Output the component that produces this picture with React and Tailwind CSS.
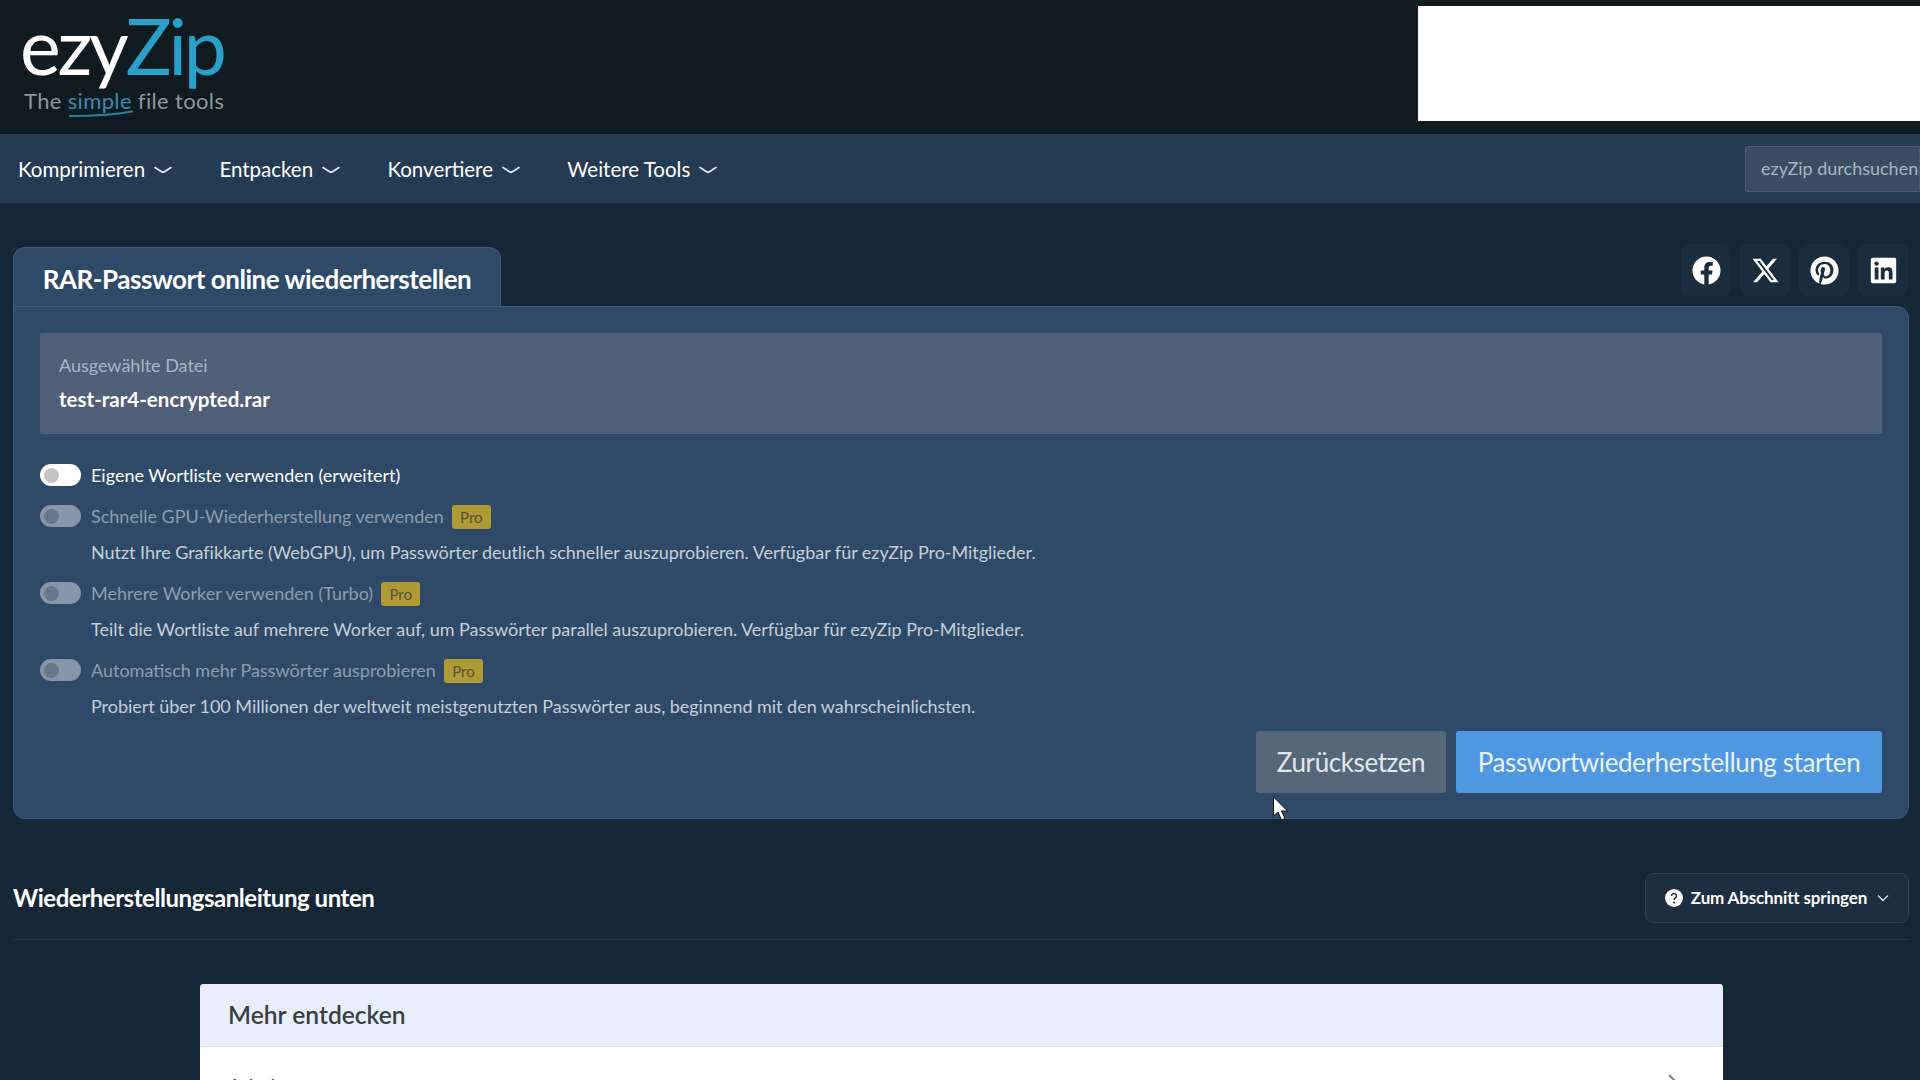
import React from "react";
import { FaFacebook, FaPinterest, FaLinkedin } from "react-icons/fa";
import { FaXTwitter } from "react-icons/fa6";

const Chev = () => (
  <svg width="18" height="8" viewBox="0 0 18 8" fill="none" stroke="#e8eef3" strokeWidth="1.6" strokeLinecap="round" strokeLinejoin="round">
    <path d="M1 1.5 C4 3.5 7 5.5 9 6.5 C11 5.5 14 3.5 17 1.5" />
  </svg>
);

const NavItem = ({ label }) => (
  <div className="flex items-center gap-[9px] text-[20.5px] text-white">
    <span>{label}</span>
    <Chev />
  </div>
);

const Toggle = ({ active }) => (
  <div className={`flex h-[22px] w-[41px] shrink-0 items-center rounded-full pl-[4px] ${active ? "bg-white" : "bg-[#8796a8]"}`}>
    <div className={`h-[15px] w-[15px] rounded-full ${active ? "bg-[#c4c4c4]" : "bg-[#687789]"}`} />
  </div>
);

const Pro = () => (
  <span className="ml-[8px] mt-[2px] flex h-[24px] w-[39px] items-center justify-center rounded-[3px] bg-[#b09a34] text-[15px] text-[#52533f]">Pro</span>
);

const Option = ({ label, desc }) => (
  <div className="flex flex-col">
    <div className="flex h-[24px] items-center gap-[10px]">
      <Toggle />
      <div className="flex items-center">
        <span className="text-[18px] text-[#8e9cad]">{label}</span>
        <Pro />
      </div>
    </div>
    <p className="mt-[12px] h-[24px] pl-[51px] text-[18px] leading-[24px] tracking-[-0.03px] text-[#c6ced7]">{desc}</p>
  </div>
);

const Social = ({ children }) => (
  <div className="flex h-[52px] w-[50px] items-center justify-center rounded-[8px] bg-[#1a2d3e] text-[29px] text-white">{children}</div>
);

export default function App() {
  return (
    <div className="relative h-screen w-full overflow-hidden bg-[#152737] font-['Lato',sans-serif]">
      <header className="flex h-[134px] items-start justify-between bg-[#0f1a21]">
        <div className="ml-[20px] mt-[3px] flex flex-col">
          <div className="flex h-[85px] items-center text-[77px] font-normal leading-none tracking-[-3.2px]">
            <span className="text-white">ezy</span>
            <span className="text-[#2a9fc9]">Zip</span>
          </div>
          <div className="relative ml-[4px] text-[22px] leading-[26px] tracking-[0.35px] text-[#8b999d]">
            The <span className="text-[#3b8cab]">simple</span> file tools
            <svg className="absolute left-[45px] top-[22px]" width="64" height="8" viewBox="0 0 64 8" fill="none">
              <path d="M1 6 C20 6 44 5 63 1.5" stroke="#2f7f9e" strokeWidth="2.2" strokeLinecap="round" />
            </svg>
          </div>
        </div>
        <div className="mt-[6px] h-[115px] w-[502px] bg-white" />
      </header>

      <nav className="flex h-[71px] items-center justify-between border-b-2 border-[#16293a] bg-[#243b52] pl-[18px] pt-[2px]">
        <div className="flex items-center gap-[47.3px]">
          <NavItem label="Komprimieren" />
          <NavItem label="Entpacken" />
          <NavItem label="Konvertiere" />
          <NavItem label="Weitere Tools" />
        </div>
        <div className="mb-[2px] flex h-[46px] w-[175px] shrink-0 items-center overflow-hidden whitespace-nowrap rounded-l-[3px] border border-[#4a5d72] bg-[#3a4d62] pl-[15px] text-[18px] text-[#a9b4bf]">
          ezyZip durchsuchen
        </div>
      </nav>

      <main className="pl-[13px] pr-[11px] pt-[39px]">
        <div className="flex items-end justify-between">
          <div className="flex h-[59px] w-[488px] items-center justify-center rounded-t-[12px] border-x border-t border-[#3e5a78] bg-[#2f4a68] pt-[4px] text-[26px] font-bold tracking-[-0.47px] text-white">
            RAR-Passwort online wiederherstellen
          </div>
          <div className="mb-[10px] mr-[1px] flex gap-[9px]">
            <Social><FaFacebook /></Social>
            <Social><FaXTwitter /></Social>
            <Social><FaPinterest /></Social>
            <Social><FaLinkedin /></Social>
          </div>
        </div>

        <section className="h-[513px] rounded-b-[12px] rounded-tr-[12px] border border-[#3e5a78] bg-[#2f4a68] px-[26px] pt-[26px]">
          <div className="flex h-[101px] flex-col rounded-[2px] bg-[#4f6078] px-[19px] pt-[20px]">
            <span className="text-[18px] leading-[24px] text-[#aab4c0]">Ausgewählte Datei</span>
            <span className="mt-[10px] text-[20.5px] font-bold leading-[24px] text-white">test-rar4-encrypted.rar</span>
          </div>

          <div className="mt-[29px] flex h-[24px] items-center gap-[10px]">
            <Toggle active />
            <span className="text-[18px] text-white">Eigene Wortliste verwenden (erweitert)</span>
          </div>
          <div className="mt-[17px] flex flex-col gap-[17px]">
            <Option label="Schnelle GPU-Wiederherstellung verwenden" desc="Nutzt Ihre Grafikkarte (WebGPU), um Passwörter deutlich schneller auszuprobieren. Verfügbar für ezyZip Pro-Mitglieder." />
            <Option label="Mehrere Worker verwenden (Turbo)" desc="Teilt die Wortliste auf mehrere Worker auf, um Passwörter parallel auszuprobieren. Verfügbar für ezyZip Pro-Mitglieder." />
            <Option label="Automatisch mehr Passwörter ausprobieren" desc="Probiert über 100 Millionen der weltweit meistgenutzten Passwörter aus, beginnend mit den wahrscheinlichsten." />
          </div>

          <div className="mt-[13px] flex justify-end gap-[10px]">
            <button className="h-[62px] w-[190px] rounded-[3px] bg-[#56677a] pt-[1px] text-[26px] tracking-[-0.4px] text-[#e3e7ea]">Zurücksetzen</button>
            <button className="h-[62px] w-[426px] rounded-[3px] bg-[#4f97e0] pt-[1px] text-[26px] tracking-[-0.42px] text-[#e8f2fb]">Passwortwiederherstellung starten</button>
          </div>
        </section>

        <div className="mt-[54px] flex h-[50px] items-center justify-between">
          <h2 className="shrink-0 whitespace-nowrap text-[24px] font-bold tracking-[-0.45px] text-white">Wiederherstellungsanleitung unten</h2>
          <button className="flex h-[50px] w-[264px] items-center justify-center gap-[8px] rounded-[8px] border border-[#2d4052] bg-[#1c2e3f] text-[17px] font-bold tracking-[-0.15px] text-white">
            <svg width="18" height="18" viewBox="0 0 18 18">
              <circle cx="9" cy="9" r="9" fill="#fff" />
              <path d="M6.6 7a2.4 2.4 0 1 1 3.7 2c-.9.6-1.3 1-1.3 2" fill="none" stroke="#1c2e3f" strokeWidth="1.5" />
              <circle cx="9" cy="13.4" r="1" fill="#1c2e3f" />
            </svg>
            <span>Zum Abschnitt springen</span>
            <svg className="ml-[2px]" width="12" height="8" viewBox="0 0 12 8" fill="none" stroke="#d6dde3" strokeWidth="1.4">
              <path d="M1 1.5 L6 6.5 L11 1.5" />
            </svg>
          </button>
        </div>
        <div className="mt-[16px] h-px bg-[#26394a]" />

        <div className="ml-[187px] mt-[44px] w-[1523px] overflow-hidden rounded-t-[4px] bg-white">
          <div className="flex h-[63px] items-center border-b border-[#dfe3ea] bg-[#e8effb] pl-[28px] pt-[1px] text-[24.6px] font-semibold text-[#3a3f45]">
            Mehr entdecken
          </div>
          <div className="flex h-[60px] items-start justify-between px-[28px] pt-[26px] text-[20px] leading-[24px] text-[#3a3f45]">
            <span>Arbeiten</span>
            <svg className="mr-[16px]" width="12" height="20" viewBox="0 0 12 20" fill="none" stroke="#777" strokeWidth="1.8">
              <path d="M2 2 L10 10 L2 18" />
            </svg>
          </div>
        </div>
      </main>

      <svg className="absolute left-[1272px] top-[796px]" width="18" height="26" viewBox="0 0 18 26">
        <path d="M1.5 1 V20 L6 16 L9.5 24 L13 22.5 L9.5 15 H15.5 Z" fill="#fff" stroke="#111" strokeWidth="1" />
      </svg>
    </div>
  );
}
